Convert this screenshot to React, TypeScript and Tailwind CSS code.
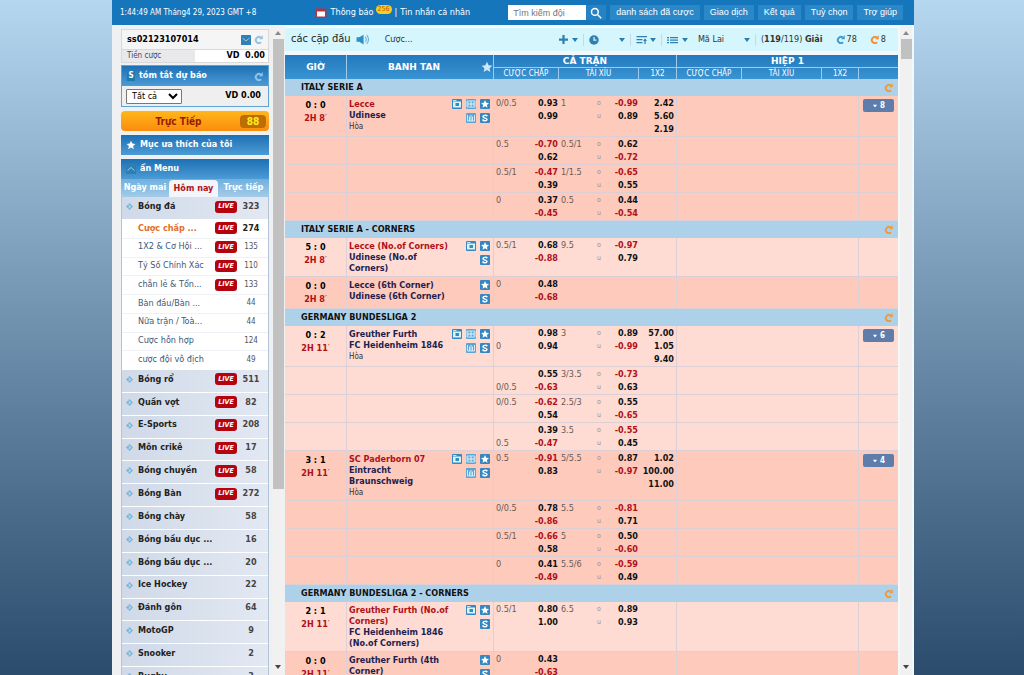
import type { ReactNode } from "react";

type Odds = {
  hdp?: [string, string];
  hdpOdds?: [string, string];
  total?: string;
  totalOdds?: [string, string];
  x12?: string[];
};

type Match = {
  score: string;
  time: string;
  home: string;
  away: string;
  homeRed?: boolean;
  draw?: boolean;
  icons: IconName[][];
  more?: number;
  dark?: boolean;
  rows: Odds[];
};

type League = { name: string; matches: Match[] };

type IconName = "tv" | "field" | "star" | "stats" | "dollar";

const ALL_ICONS: IconName[][] = [
  ["tv", "field", "star"],
  ["stats", "dollar"],
];
const TV_ICONS: IconName[][] = [["tv", "star"], ["dollar"]];
const BASIC_ICONS: IconName[][] = [["star"], ["dollar"]];

const leagues: League[] = [
  {
    name: "ITALY SERIE A",
    matches: [
      {
        score: "0 : 0",
        time: "2H 8",
        home: "Lecce",
        away: "Udinese",
        homeRed: true,
        draw: true,
        icons: ALL_ICONS,
        more: 8,
        dark: true,
        rows: [
          { hdp: ["0/0.5", ""], hdpOdds: ["0.93", "0.99"], total: "1", totalOdds: ["-0.99", "0.89"], x12: ["2.42", "5.60", "2.19"] },
          { hdp: ["0.5", ""], hdpOdds: ["-0.70", "0.62"], total: "0.5/1", totalOdds: ["0.62", "-0.72"] },
          { hdp: ["0.5/1", ""], hdpOdds: ["-0.47", "0.39"], total: "1/1.5", totalOdds: ["-0.65", "0.55"] },
          { hdp: ["0", ""], hdpOdds: ["0.37", "-0.45"], total: "0.5", totalOdds: ["0.44", "-0.54"] },
        ],
      },
    ],
  },
  {
    name: "ITALY SERIE A - CORNERS",
    matches: [
      {
        score: "5 : 0",
        time: "2H 8",
        home: "Lecce (No.of Corners)",
        away: "Udinese (No.of Corners)",
        homeRed: true,
        icons: TV_ICONS,
        rows: [{ hdp: ["0.5/1", ""], hdpOdds: ["0.68", "-0.88"], total: "9.5", totalOdds: ["-0.97", "0.79"] }],
      },
      {
        score: "0 : 0",
        time: "2H 8",
        home: "Lecce (6th Corner)",
        away: "Udinese (6th Corner)",
        icons: BASIC_ICONS,
        dark: true,
        rows: [{ hdp: ["0", ""], hdpOdds: ["0.48", "-0.68"] }],
      },
    ],
  },
  {
    name: "GERMANY BUNDESLIGA 2",
    matches: [
      {
        score: "0 : 2",
        time: "2H 11",
        home: "Greuther Furth",
        away: "FC Heidenheim 1846",
        draw: true,
        icons: ALL_ICONS,
        more: 6,
        rows: [
          { hdp: ["", "0"], hdpOdds: ["0.98", "0.94"], total: "3", totalOdds: ["0.89", "-0.99"], x12: ["57.00", "1.05", "9.40"] },
          { hdp: ["", "0/0.5"], hdpOdds: ["0.55", "-0.63"], total: "3/3.5", totalOdds: ["-0.73", "0.63"] },
          { hdp: ["0/0.5", ""], hdpOdds: ["-0.62", "0.54"], total: "2.5/3", totalOdds: ["0.55", "-0.65"] },
          { hdp: ["", "0.5"], hdpOdds: ["0.39", "-0.47"], total: "3.5", totalOdds: ["-0.55", "0.45"] },
        ],
      },
      {
        score: "3 : 1",
        time: "2H 11",
        home: "SC Paderborn 07",
        away: "Eintracht Braunschweig",
        homeRed: true,
        draw: true,
        icons: ALL_ICONS,
        more: 4,
        dark: true,
        rows: [
          { hdp: ["0.5", ""], hdpOdds: ["-0.91", "0.83"], total: "5/5.5", totalOdds: ["0.87", "-0.97"], x12: ["1.02", "100.00", "11.00"] },
          { hdp: ["0/0.5", ""], hdpOdds: ["0.78", "-0.86"], total: "5.5", totalOdds: ["-0.81", "0.71"] },
          { hdp: ["0.5/1", ""], hdpOdds: ["-0.66", "0.58"], total: "5", totalOdds: ["0.50", "-0.60"] },
          { hdp: ["0", ""], hdpOdds: ["0.41", "-0.49"], total: "5.5/6", totalOdds: ["-0.59", "0.49"] },
        ],
      },
    ],
  },
  {
    name: "GERMANY BUNDESLIGA 2 - CORNERS",
    matches: [
      {
        score: "2 : 1",
        time: "2H 11",
        home: "Greuther Furth (No.of Corners)",
        away: "FC Heidenheim 1846 (No.of Corners)",
        homeRed: true,
        icons: TV_ICONS,
        rows: [{ hdp: ["0.5/1", ""], hdpOdds: ["0.80", "1.00"], total: "6.5", totalOdds: ["0.89", "0.93"] }],
      },
      {
        score: "0 : 0",
        time: "2H 11",
        home: "Greuther Furth (4th Corner)",
        away: "FC Heidenheim 1846",
        icons: BASIC_ICONS,
        dark: true,
        rows: [{ hdp: ["0", ""], hdpOdds: ["0.43", "-0.63"] }],
      },
    ],
  },
];

const betTypes = [
  { name: "Cược chấp ...", count: 274, live: true, active: true },
  { name: "1X2 & Cơ Hội ...", count: 135, live: true },
  { name: "Tỷ Số Chính Xác", count: 110, live: true },
  { name: "chẵn lẻ & Tổn...", count: 133, live: true },
  { name: "Bàn đầu/Bàn ...", count: 44 },
  { name: "Nữa trận / Toà...", count: 44 },
  { name: "Cược hỗn hợp", count: 124 },
  { name: "cược đội vô địch", count: 49 },
];

const sports = [
  { name: "Bóng rổ", count: 511, live: true },
  { name: "Quần vợt", count: 82, live: true },
  { name: "E-Sports", count: 208, live: true },
  { name: "Môn crikê", count: 17, live: true },
  { name: "Bóng chuyền", count: 58, live: true },
  { name: "Bóng Bàn", count: 272, live: true },
  { name: "Bóng chày", count: 58 },
  { name: "Bóng bầu dục ...", count: 16 },
  { name: "Bóng bầu dục ...", count: 20 },
  { name: "Ice Hockey", count: 22 },
  { name: "Đánh gôn", count: 64 },
  { name: "MotoGP", count: 9 },
  { name: "Snooker", count: 2 },
  { name: "Rugby", count: 3 },
];

const navItems = ["danh sách đã cược", "Giao dịch", "Kết quả", "Tuỳ chọn", "Trợ giúp"];

const STAR = "M8 1l2.100 4.600 5 .6-3.700 3.400 1 5L8 12.100l-4.400 2.500 1-5L.900 6.200l5-.6z";

function StarIcon({ className }: { className?: string }) {
  return (
    <svg viewBox="0 0 16 16" className={className} fill="currentColor" aria-hidden="true">
      <path d={STAR} />
    </svg>
  );
}

function Refresh({ className }: { className?: string }) {
  return (
    <svg viewBox="0 0 16 16" className={className} fill="none" stroke="currentColor" strokeWidth="3.500" aria-hidden="true">
      <path d="M12 4.500A5.500 5.500 0 1 0 12.500 13" />
      <path d="M15.500 0v7.500H9z" fill="currentColor" stroke="none" />
    </svg>
  );
}

function Caret({ className = "text-[#2b7dad]" }: { className?: string }) {
  return (
    <svg viewBox="0 0 6 4" className={`h-1 w-1.5 shrink-0 ${className}`} fill="currentColor" aria-hidden="true">
      <path d="M0 0h6L3 4z" />
    </svg>
  );
}

function MatchIcon({ name }: { name: IconName }) {
  const pale = name === "field" || name === "stats";
  return (
    <button type="button" aria-label={name} className="block size-[10px]">
      <svg viewBox="0 0 20 20" className="size-full">
        <rect width="20" height="20" rx="2" fill={pale ? "#5aa5d3" : "#3487c1"} />
        {name === "tv" && (
          <>
            <rect x="2" y="5" width="16" height="12" fill="#d9f3fb" />
            <rect x="2" y="2" width="7" height="2" fill="#bfe6f5" />
            <rect x="7" y="8" width="7" height="6" fill="#2a92c0" />
          </>
        )}
        {name === "field" && (
          <g stroke="#d3ebf7" strokeWidth="2" fill="none">
            <path d="M2 4h16v12H2zM10 4v12M2 8h4v4H2M18 8h-4v4h4" />
            <circle cx="10" cy="10" r="2" />
          </g>
        )}
        {name === "star" && <path d={STAR} transform="translate(1 1) scale(1.130)" fill="#fff" />}
        {name === "stats" && (
          <path d="M3 4v12h14V4M7 7v9M10 4v12M13 7v9" stroke="#d3ebf7" strokeWidth="2" fill="none" />
        )}
        {name === "dollar" && (
          <path
            d="M14.500 6.500C13 4 6 4 6 7.500S14.500 9.500 14 13 7 16 5 13"
            stroke="#fff"
            strokeWidth="3"
            fill="none"
          />
        )}
      </svg>
    </button>
  );
}

function LiveBadge() {
  return (
    <span className="flex h-3 w-[22px] items-center justify-center rounded-[3px] bg-[#b5040e] text-[7px] font-bold text-white italic">
      LIVE
    </span>
  );
}

function Scrollbar({ thumb }: { thumb: string }) {
  return (
    <div className="flex w-[12px] shrink-0 flex-col items-center bg-[#f1f1f1] py-1" aria-hidden="true">
      <Caret className="mt-0.5 mb-1 rotate-180 text-[#8a8a8a]" />
      <div className={`w-[11px] bg-[#c1c1c1] ${thumb}`} />
      <Caret className="mt-auto mb-0.5 text-[#444]" />
    </div>
  );
}

function TopBar() {
  return (
    <header className="flex h-[25px] shrink-0 items-center bg-[#1676bc] pr-[11px] pl-2 text-white">
      <time className="text-[8px]">1:44:49 AM Tháng4 29, 2023 GMT +8</time>
      <div className="ml-auto flex items-center text-[9px]">
        <svg viewBox="0 0 24 20" className="mr-1 h-[10px] w-3" aria-hidden="true">
          <rect x="1" y="1" width="22" height="19" rx="2" fill="#b8323f" />
          <rect x="4" y="7" width="16" height="10" fill="#fff" />
        </svg>
        <a href="#notice">Thông báo</a>
        <span className="mb-1.5 ml-0.5 rounded-md bg-[#f3d21c] px-0.5 text-[7px] leading-[9px] text-[#c4570c]">256</span>
        <span className="mx-[3px]">|</span>
        <a href="#messages">Tin nhắn cá nhân</a>
      </div>
      <form className="ml-[38px] flex font-['Liberation_Sans',sans-serif]">
        <input
          aria-label="Tìm kiếm đội"
          placeholder="Tìm kiếm đội"
          className="h-[15px] w-[78px] bg-white px-[5px] text-[9px] text-black placeholder:text-[#777]"
        />
        <button type="button" aria-label="Tìm" className="flex h-[15px] w-5 items-center justify-center bg-[#2583c5]">
          <svg viewBox="0 0 16 16" className="size-3" fill="none" stroke="#fff" strokeWidth="2" aria-hidden="true">
            <circle cx="6.500" cy="6.500" r="4.500" />
            <path d="M10 10l5 5" />
          </svg>
        </button>
      </form>
      <nav className="ml-1 flex gap-1 font-['Liberation_Sans',sans-serif] text-[9px]">
        {navItems.map((item) => (
          <button key={item} type="button" className="h-[15px] bg-[#2a87c8] px-[6px] leading-[15px] whitespace-nowrap">
            {item}
          </button>
        ))}
      </nav>
    </header>
  );
}

function BlueHeader({ children, className = "" }: { children: ReactNode; className?: string }) {
  return (
    <div
      className={`flex h-5 items-center bg-linear-to-b from-[#1d70b4] to-[#4b9bd6] px-[5px] text-[9px] font-bold text-white ${className}`}
    >
      {children}
    </div>
  );
}

function Sport({ name, count, live }: { name: string; count: number; live?: boolean }) {
  return (
    <li className="grid grid-cols-[16px_1fr_22px_28px] items-center border-b border-white bg-linear-to-r from-[#cfd9e8] to-[#e3e9f3] pr-[3px] pb-[3px] text-[9px] font-bold text-[#222]">
      <svg viewBox="0 0 14 14" className="ml-1 size-[7px]" aria-hidden="true">
        <path d="M7 0l7 7-7 7-7-7z" fill="#7db5d9" />
        <path d="M5 4l4 3-4 3" fill="none" stroke="#e8f3fa" strokeWidth="1.500" />
      </svg>
      <a href="#sport" className="whitespace-nowrap">
        {name}
      </a>
      <span>{live && <LiveBadge />}</span>
      <span className="text-center text-[#444]">{count}</span>
    </li>
  );
}

function Sidebar() {
  return (
    <aside className="flex w-[173px] shrink-0 overflow-hidden bg-[#eef0f2]">
      <div className="ml-[9px] flex min-w-0 flex-1 flex-col pt-1">
        <div className="border border-[#d9d9d9] bg-[#f5f5f5]">
          <div className="flex h-[19px] items-center px-[5px]">
            <b className="flex-1 text-[9px]">ss02123107014</b>
            <svg viewBox="0 0 20 20" className="mr-[3px] size-[10px]" aria-hidden="true">
              <rect width="20" height="20" rx="1" fill="#317fb5" />
              <path d="M3 6l7 6 7-6" fill="none" stroke="#bcdcf0" strokeWidth="1.500" />
            </svg>
            <Refresh className="size-[9px] text-[#94c2e4]" />
          </div>
          <div className="flex h-[13px] items-center border-t border-[#d9d9d9] bg-linear-to-r from-[#e9e9ec] from-50% to-white to-50% pr-[3px] pl-[5px]">
            <span className="flex-1 text-[8px] text-[#444466]">Tiền cược</span>
            <b className="text-[9px]">VD&nbsp; 0.00</b>
          </div>
        </div>

        <section className="mt-0.5 border border-[#5fa3d3]">
          <BlueHeader>
            <span className="mr-1 flex h-[9px] w-2 items-center justify-center bg-[#1d7aaa] text-[8px]">S</span>
            <span className="flex-1">tóm tắt dự báo</span>
            <Refresh className="size-[9px] text-[#8fc4ea]" />
          </BlueHeader>
          <div className="flex h-5 items-center justify-between bg-[#efefef] px-1">
            <select
              aria-label="Loại cược"
              className="h-[15px] w-14 rounded-[1px] border border-[#777] bg-white pl-px text-[9px]"
            >
              <option>Tất cả</option>
            </select>
            <b className="pr-[3px] text-[9px]">VD 0.00</b>
          </div>
        </section>

        <button
          type="button"
          className="mt-1 flex h-5 shrink-0 items-center rounded-sm bg-linear-to-b from-[#ffb61c] to-[#fb8c0c] pr-[3px] text-[10px] font-bold text-[#9b1c00]"
        >
          <span className="flex-1 pr-1">Trực Tiếp</span>
          <span className="h-[13px] w-[26px] rounded-sm bg-[#bd6d04] leading-[13px] text-[#ffee1a]">88</span>
        </button>

        <BlueHeader className="mt-1 shrink-0">
          <StarIcon className="mr-1 size-[10px]" />
          Mục ưa thích của tôi
        </BlueHeader>

        <section className="mt-1">
          <BlueHeader>
            <svg viewBox="0 0 20 20" className="mr-1 size-[10px]" fill="none" aria-hidden="true">
              <rect width="20" height="20" fill="#2d7fb2" />
              <path d="M3 13l7-6 7 6" stroke="#8fd0ec" strokeWidth="2" />
            </svg>
            ẩn Menu
          </BlueHeader>
          <div className="flex h-[18px] bg-linear-to-b from-[#6fb0de] to-[#a3cbe9] text-[9px] font-bold whitespace-nowrap text-white">
            <button type="button" className="w-12">
              Ngày mai
            </button>
            <button type="button" className="mt-px w-[49px] rounded-t-sm bg-[#f2f5fa] text-[#b3101c]">
              Hôm nay
            </button>
            <button type="button" className="flex-1">
              Trực tiếp
            </button>
          </div>
          <div className="border-x border-[#b4c4d8]">
            <ul className="grid h-[23px]">
              <Sport name="Bóng đá" count={323} live />
            </ul>
            <ul className="grid h-[150px] auto-rows-fr bg-white text-[9px]">
              {betTypes.map((bet) => (
                <li
                  key={bet.name}
                  className="grid grid-cols-[16px_1fr_22px_28px] items-center border-b border-[#eef2f6] pr-[3px] pb-px last:border-0"
                >
                  <span />
                  <a
                    href="#bet"
                    className={`whitespace-nowrap ${bet.active ? "font-bold text-[#e07028]" : "text-[#3d5878]"}`}
                  >
                    {bet.name}
                  </a>
                  <span>{bet.live && <LiveBadge />}</span>
                  <span className={`text-center ${bet.active ? "font-bold text-[#222]" : "text-[8px] text-[#555]"}`}>
                    {bet.count}
                  </span>
                </li>
              ))}
            </ul>
            <ul className="grid h-80 auto-rows-fr">
              {sports.map((sport, i) => (
                <Sport key={i} {...sport} />
              ))}
            </ul>
          </div>
        </section>
      </div>
      <div className="ml-0.5 flex pr-px pl-px">
        <Scrollbar thumb="h-[450px]" />
      </div>
    </aside>
  );
}

function Divider() {
  return <span className="mx-[5px] h-3 w-px bg-[#bfdde8]" />;
}

function Toolbar() {
  return (
    <div className="flex h-[23px] shrink-0 items-center bg-[#d5f6fd] pr-3 pl-1.5 text-[9px] text-[#333]">
      <h1 className="text-[11px] font-medium text-[#222]">các cặp đấu</h1>
      <svg viewBox="0 0 24 20" className="ml-[5px] h-[11px] w-[13px]" aria-hidden="true">
        <path d="M1 6h5l8-5v18l-8-5H1z" fill="#2f8fc6" />
        <path d="M17 5q4 5 0 10M20 2q6 8 0 16" fill="none" stroke="#6ab4de" strokeWidth="2" />
      </svg>
      <span className="ml-4">Cược...</span>
      <div className="ml-auto flex items-center">
        <button type="button" aria-label="Thêm" className="flex items-center gap-1">
          <svg viewBox="0 0 10 10" className="size-[9px]" aria-hidden="true">
            <path d="M5 0v10M0 5h10" stroke="#2f80b0" strokeWidth="2.500" />
          </svg>
          <Caret />
        </button>
        <Divider />
        <button type="button" aria-label="Thời gian" className="flex items-center gap-5">
          <svg viewBox="0 0 20 20" className="size-[10px]" aria-hidden="true">
            <circle cx="10" cy="10" r="9.500" fill="#2f80b0" />
            <path d="M10 4v6h5" stroke="#d5f6fd" strokeWidth="2.500" fill="none" />
          </svg>
          <Caret />
        </button>
        <Divider />
        <button type="button" aria-label="Sắp xếp" className="flex items-center gap-0.5">
          <svg viewBox="0 0 24 20" className="h-[10px] w-3" stroke="#2f80b0" strokeWidth="2.500" aria-hidden="true">
            <path d="M1 3h21M1 9h12M1 15h12M18 18V8" />
            <path d="M14 12l4-5 4 5z" fill="#2f80b0" stroke="none" />
          </svg>
          <Caret />
        </button>
        <Divider />
        <button type="button" aria-label="Danh sách" className="flex items-center gap-1">
          <svg viewBox="0 0 22 16" className="h-2 w-[11px]" stroke="#2f80b0" strokeWidth="2.500" aria-hidden="true">
            <path d="M0 3h4M6 3h16M0 8h4M6 8h16M0 13h4M6 13h16" />
          </svg>
          <Caret />
        </button>
        <label className="ml-[10px] flex items-center">
          <select aria-label="Loại tỷ lệ" className="w-[46px] appearance-none bg-transparent text-[9px]">
            <option>Mã Lai</option>
          </select>
          <Caret />
        </label>
        <Divider />
        <span>
          (<b>119</b>/119) <b>Giải</b>
        </span>
        <button type="button" className="ml-[13px] flex items-center gap-0.5">
          <Refresh className="size-[9px] text-[#3f9bd0]" />
          78
        </button>
        <button type="button" className="ml-[13px] flex items-center gap-0.5">
          <Refresh className="size-[9px] text-[#f0913a]" />8
        </button>
      </div>
    </div>
  );
}

function Price({ value }: { value: string }) {
  return <span className={`block ${value.startsWith("-") ? "text-[#b01018]" : "text-[#111]"}`}>{value}</span>;
}

function OddsCells({ odds, line }: { odds: Odds; line: string }) {
  return (
    <>
      <td className={`border-b pt-px pr-px pl-[2px] ${line}`}>
        <div className="flex justify-between">
          <div className="text-[#6b5a55]">
            {odds.hdp?.map((v, i) => (
              <span key={i} className="block h-[13px]">
                {v}
              </span>
            ))}
          </div>
          <div className="text-right font-bold">
            {odds.hdpOdds?.map((v, i) => (
              <Price key={i} value={v} />
            ))}
          </div>
        </div>
      </td>
      <td className={`border-b pt-px pr-px pl-[2px] ${line}`}>
        {odds.totalOdds && (
          <div className="grid grid-cols-[36px_1fr_auto]">
            <span className="text-[#6b5a55]">{odds.total}</span>
            <span className="text-[7px] text-[#a08f8a]">
              o<br />u
            </span>
            <div className="text-right font-bold">
              {odds.totalOdds.map((v, i) => (
                <Price key={i} value={v} />
              ))}
            </div>
          </div>
        )}
      </td>
      <td className={`border-r border-b pt-px pr-[2px] text-right font-bold ${line}`}>
        <div className="flex flex-col items-end">
          {odds.x12?.map((v) => (
            <Price key={v} value={v} />
          ))}
        </div>
      </td>
    </>
  );
}

function MatchRows({ match }: { match: Match }) {
  const line = "border-[#dccfd6]";
  return (
    <>
      {match.rows.map((odds, i) => (
        <tr
          key={i}
          className={`align-top text-[9px] leading-[13px] ${match.dark ? "bg-[#fecabb]" : "bg-[#fedcd3]"} ${i === 0 ? "h-8" : ""}`}
        >
          <td className={`border-r border-b pt-[3px] text-center font-bold ${line}`}>
            {i === 0 && (
              <>
                {match.score}
                <br />
                <span className="text-[#b01018]">
                  {match.time}
                  <span className="font-normal">&#8242;</span>
                </span>
              </>
            )}
          </td>
          <td className={`border-r border-b pt-[3px] pr-[3px] pb-[2px] pl-[2px] leading-[11px] ${line}`}>
            {i === 0 && (
              <div className="flex justify-between">
                <div className="max-w-[100px]">
                  <a
                    href="#match"
                    className={`block font-bold ${match.homeRed ? "text-[#b01018]" : "text-[#1d2150]"}`}
                  >
                    {match.home}
                  </a>
                  <a href="#match" className="block font-bold text-[#1d2150]">
                    {match.away}
                  </a>
                  {match.draw && <span className="block text-[8px] text-[#333]">Hòa</span>}
                </div>
                <div className="flex flex-col items-end gap-1">
                  {match.icons.map((group, g) => (
                    <div key={g} className="flex gap-1">
                      {group.map((icon) => (
                        <MatchIcon key={icon} name={icon} />
                      ))}
                    </div>
                  ))}
                </div>
              </div>
            )}
          </td>
          <OddsCells odds={odds} line={line} />
          <td colSpan={3} className={`border-r border-b ${line}`} />
          <td className={`border-b px-1 pt-[3px] ${line}`}>
            {i === 0 && match.more && (
              <button
                type="button"
                className="flex h-[13px] w-full items-center justify-center gap-0.5 rounded-[2px] bg-[#5f7dab] text-[8px] font-bold text-white"
              >
                <Caret className="scale-75 text-white" />
                {match.more}
              </button>
            )}
          </td>
        </tr>
      ))}
    </>
  );
}

function OddsTable() {
  const sub = "h-[11px] border-t border-r border-[#9ccbec] text-[8px] leading-[11px] font-normal";
  return (
    <table className="w-full table-fixed border-separate border-spacing-0">
      <colgroup>
        <col className="w-[62px]" />
        <col />
        <col className="w-[65px]" />
        <col className="w-[80px]" />
        <col className="w-[38px]" />
        <col className="w-[65px]" />
        <col className="w-[80px]" />
        <col className="w-[37px]" />
        <col className="w-[39px]" />
      </colgroup>
      <thead className="bg-linear-to-b from-[#2279bd] to-[#3a93d2] font-['DejaVu_Sans',sans-serif] text-[9px] text-white">
        <tr className="h-3 leading-[12px]">
          <th rowSpan={2} className="border-r border-[#9ccbec]">
            GIỜ
          </th>
          <th rowSpan={2} className="border-r border-[#9ccbec]">
            <div className="flex items-center">
              <span className="flex-1">BANH TAN</span>
              <StarIcon className="size-3 text-[#cfe8f8]" />
            </div>
          </th>
          <th colSpan={3} className="border-r border-[#9ccbec]">
            CẢ TRẬN
          </th>
          <th colSpan={4}>HIỆP 1</th>
        </tr>
        <tr className="font-['DejaVu_Sans_Condensed','DejaVu_Sans',sans-serif]">
          <th className={sub}>CƯỢC CHẤP</th>
          <th className={sub}>TÀI XỈU</th>
          <th className={sub}>1X2</th>
          <th className={sub}>CƯỢC CHẤP</th>
          <th className={sub}>TÀI XỈU</th>
          <th className={sub}>1X2</th>
          <th className="border-t border-[#9ccbec]" />
        </tr>
      </thead>
      <tbody>
        {leagues.map((league) => (
          <LeagueRows key={league.name} league={league} />
        ))}
      </tbody>
    </table>
  );
}

function LeagueRows({ league }: { league: League }) {
  return (
    <>
      <tr className="h-[17px] bg-[#aed1ea] text-[9px] text-[#111]">
        <th colSpan={9} scope="colgroup" className="pr-[5px] pl-4 text-left">
          <div className="flex h-[17px] items-center justify-between">
            {league.name}
            <Refresh className="size-[9px] text-[#f09a3e]" />
          </div>
        </th>
      </tr>
      {league.matches.map((match) => (
        <MatchRows key={match.home} match={match} />
      ))}
    </>
  );
}

export default function App() {
  return (
    <div className="h-screen overflow-hidden bg-linear-to-b from-[#b5d7f0] to-[#2b4c6c] pr-[110px] pl-28 font-['DejaVu_Sans_Condensed','DejaVu_Sans',sans-serif]">
      <div className="flex h-full flex-col bg-[#f3f8fb]">
        <TopBar />
        <div className="flex min-h-0 flex-1">
          <Sidebar />
          <main className="flex min-w-0 flex-1 flex-col gap-1 overflow-hidden pt-[3px]">
            <Toolbar />
            <div className="min-h-0 flex-1 overflow-hidden">
              <OddsTable />
            </div>
          </main>
          <div className="flex pr-[2px] pl-[2px]">
            <Scrollbar thumb="h-5" />
          </div>
        </div>
      </div>
    </div>
  );
}
